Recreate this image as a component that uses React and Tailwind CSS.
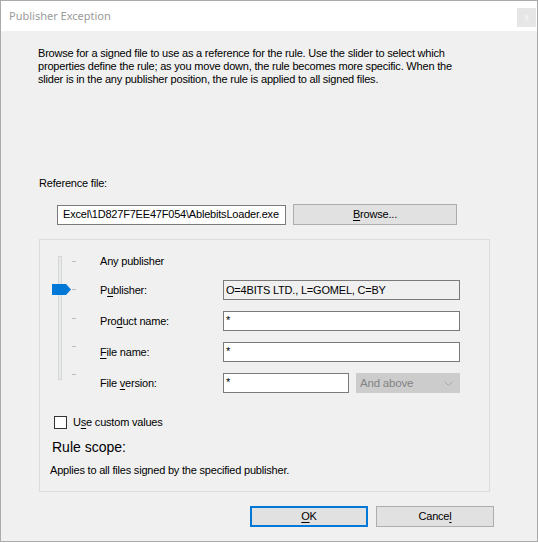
import React from "react";

const F = { fontFamily: '"Liberation Sans", Arial, sans-serif' };

function U({ children }) {
  return <span className="underline underline-offset-[2px] decoration-[1px]">{children}</span>;
}

export default function App() {
  return (
    <div className="w-[538px] h-[543px] bg-white">
      <div
        className="w-[538px] h-[542px] border border-[#aaaaaa] bg-[#f0f0f0] flex flex-col text-[11px] leading-[13px] tracking-[-0.2px] text-black"
        style={F}
      >
        {/* Title bar */}
        <div className="h-[30px] bg-white flex items-start justify-between shrink-0">
          <div
            className="ml-[8px] mt-[7px] text-[11px] leading-[16px] tracking-normal text-[#9a9a9a]"
            style={{ fontFamily: '"Noto Sans", "Open Sans", sans-serif' }}
          >
            Publisher Exception
          </div>
          <div className="mt-[7px] mr-[1px] w-[19px] h-[19px] bg-[#e6e6e6] flex items-center justify-center text-[10px] text-[#f6f6f6] leading-none">
            x
          </div>
        </div>

        {/* Description */}
        <div className="ml-[37px] mt-[16px] whitespace-nowrap">
          Browse for a signed file to use as a reference for the rule. Use the slider to select which
          <br />
          properties define the rule; as you move down, the rule becomes more specific. When the
          <br />
          slider is in the any publisher position, the rule is applied to all signed files.
        </div>

        <div className="ml-[38px] mt-[91px]">Reference file:</div>

        <div className="mt-[14px] ml-[56px] flex items-center h-[21px]">
          <div className="w-[229px] h-[20px] bg-white border border-[#7a7a7a] flex items-center overflow-hidden whitespace-nowrap pl-[5px]">
            Excel\1D827F7EE47F054\AblebitsLoader.exe
          </div>
          <div className="ml-[7px] w-[164px] h-[21px] bg-[#e1e1e1] border border-[#adadad] flex items-center justify-center">
            <span><U>B</U>rowse...</span>
          </div>
        </div>

        {/* Group box */}
        <div className="ml-[38px] mt-[14px] w-[451px] h-[253px] border border-[#dcdcdc] flex flex-col shrink-0">
          <div className="flex">
            {/* slider */}
            <div className="relative w-[60px] flex pl-[18px] pt-[16px]">
              <div className="w-[4px] h-[124px] border border-[#d6d6d6] bg-[#e7eaea]" />
              <div className="ml-[10px] mt-[5px] h-[114px] flex flex-col justify-between">
                <div className="w-[4px] h-[1px] bg-[#bdbdbd]" />
                <div className="w-[4px] h-[1px] bg-[#bdbdbd]" />
                <div className="w-[4px] h-[1px] bg-[#bdbdbd]" />
                <div className="w-[4px] h-[1px] bg-[#bdbdbd]" />
                <div className="w-[4px] h-[1px] bg-[#bdbdbd]" />
              </div>
              <svg
                className="absolute left-[12px] top-[44px]"
                width="19"
                height="11"
                viewBox="0 0 19 11"
              >
                <polygon points="0,0 14,0 19,5.5 14,11 0,11" fill="#0078d7" />
              </svg>
            </div>

            {/* rows */}
            <div className="flex flex-col pt-[11px]">
              <div className="h-[20px] flex items-center">Any publisher</div>
              <div className="mt-[9px] h-[20px] flex items-center">
                <div className="w-[123px]">P<U>u</U>blisher:</div>
                <div className="w-[237px] h-[20px] bg-[#f0f0f0] border border-[#7a7a7a] flex items-center pl-[2px] whitespace-nowrap">
                  O=4BITS LTD., L=GOMEL, C=BY
                </div>
              </div>
              <div className="mt-[11px] h-[20px] flex items-center">
                <div className="w-[123px]">Pro<U>d</U>uct name:</div>
                <div className="w-[237px] h-[20px] bg-white border border-[#7a7a7a] pl-[2px] pt-[2px]">*</div>
              </div>
              <div className="mt-[11px] h-[20px] flex items-center">
                <div className="w-[123px]"><U>F</U>ile name:</div>
                <div className="w-[237px] h-[20px] bg-white border border-[#7a7a7a] pl-[2px] pt-[2px]">*</div>
              </div>
              <div className="mt-[11px] h-[20px] flex items-center">
                <div className="w-[123px]">File <U>v</U>ersion:</div>
                <div className="w-[126px] h-[20px] bg-white border border-[#7a7a7a] pl-[2px] pt-[2px]">*</div>
                <div className="ml-[7px] w-[104px] h-[20px] bg-[#cccccc] border border-[#cccccc] flex items-center justify-between pl-[3px] pr-[6px] text-[#838383] text-[11.5px]">
                  <span>And above</span>
                  <svg width="9" height="5" viewBox="0 0 9 5">
                    <polyline points="0.5,0.5 4.5,4.5 8.5,0.5" fill="none" stroke="#a8a8a8" strokeWidth="1" />
                  </svg>
                </div>
              </div>
            </div>
          </div>

          {/* checkbox */}
          <div className="mt-[23px] ml-[14px] flex items-center h-[13px]">
            <div className="w-[13px] h-[13px] bg-white border border-[#333333]" />
            <div className="ml-[6px]">U<U>s</U>e custom values</div>
          </div>

          <div className="mt-[10px] ml-[12px] text-[14px] leading-[17px] tracking-normal text-black">Rule scope:</div>
          <div className="mt-[8px] ml-[10px]">Applies to all files signed by the specified publisher.</div>
        </div>

        {/* buttons */}
        <div className="mt-[14px] flex justify-end pr-[43px] gap-[8px]">
          <div className="w-[118px] h-[21px] bg-[#e1e1e1] border-2 border-[#0078d7] flex items-center justify-center">
            <span><U>O</U>K</span>
          </div>
          <div className="w-[118px] h-[21px] bg-[#e1e1e1] border border-[#adadad] flex items-center justify-center">
            <span>Cance<U>l</U></span>
          </div>
        </div>
      </div>
    </div>
  );
}
